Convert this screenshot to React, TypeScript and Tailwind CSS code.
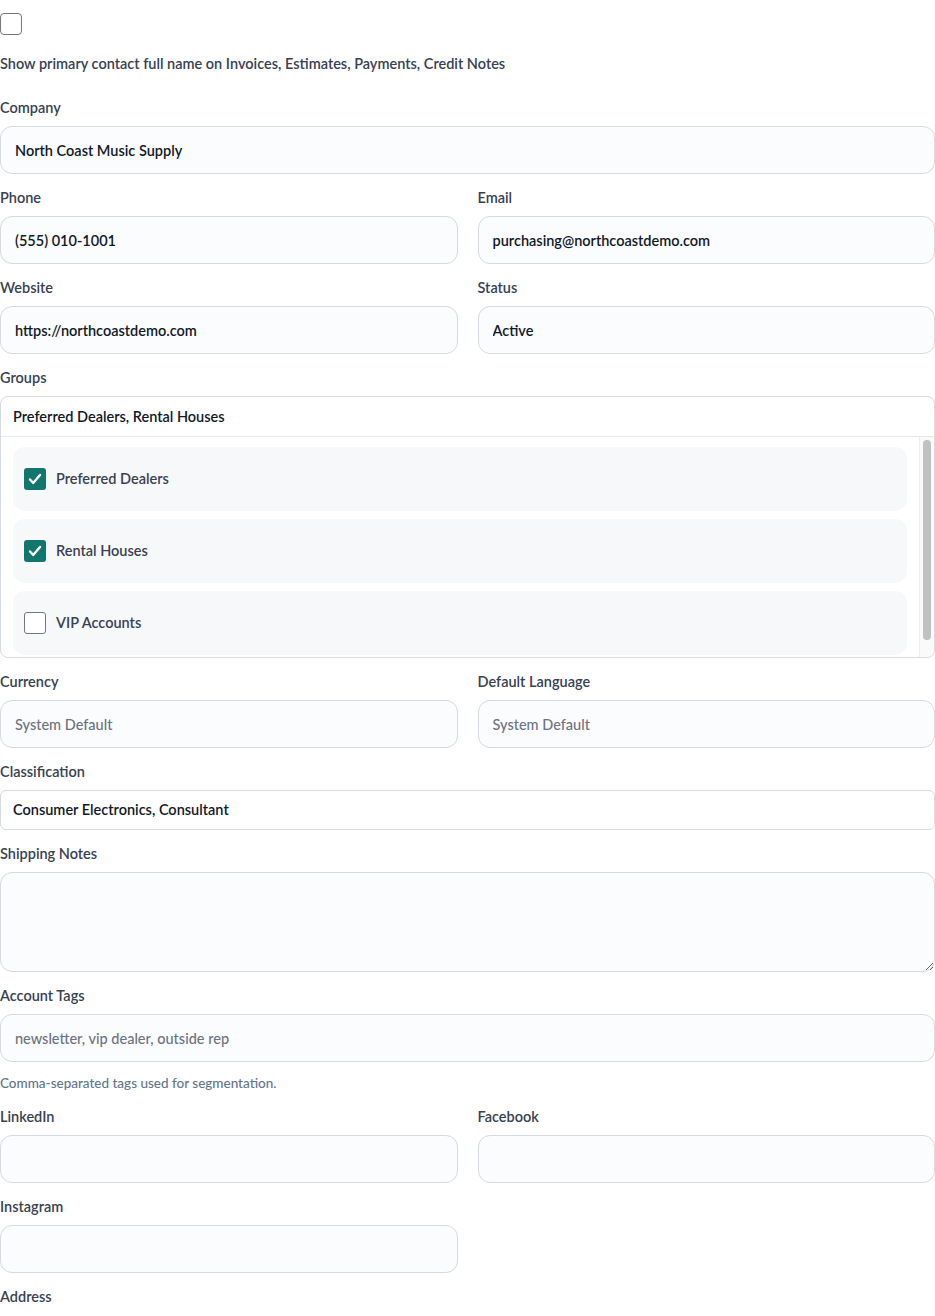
import React from "react";

const inputCls =
  "h-12 w-full rounded-xl border border-[#d5d9e0] bg-[#fbfcfd] px-[14px] text-[14.5px] font-semibold text-[#111827] placeholder:text-[#6b7280] placeholder:font-medium outline-none";

function Label({ children }: { children: React.ReactNode }) {
  return <label className="mb-2 block h-5 text-[14.5px] font-semibold leading-5 text-[#374151]">{children}</label>;
}

function Field({ label, value, placeholder }: { label: string; value?: string; placeholder?: string }) {
  return (
    <div>
      <Label>{label}</Label>
      <input className={inputCls} defaultValue={value} placeholder={placeholder} />
    </div>
  );
}

function Check({ checked }: { checked: boolean }) {
  return checked ? (
    <span className="flex h-[22px] w-[22px] items-center justify-center rounded-[3px] bg-[#13766c]">
      <svg width="16" height="16" viewBox="0 0 16 16" fill="none">
        <path d="M3 8.5l3.2 3.5L13 4" stroke="white" strokeWidth="2.4" strokeLinecap="round" strokeLinejoin="round" />
      </svg>
    </span>
  ) : (
    <span className="h-[22px] w-[22px] rounded-[3px] border border-[#767676] bg-white" />
  );
}

export default function App() {
  const groups = [
    { n: "Preferred Dealers", c: true },
    { n: "Rental Houses", c: true },
    { n: "VIP Accounts", c: false },
  ];
  return (
    <div className="w-[935px] bg-white pt-[13px] pb-2" style={{ fontFamily: "Lato, 'Open Sans', sans-serif" }}>
      <span className="block h-[22px] w-[22px] rounded-[4px] border border-[#767676] bg-white" />
      <p className="mt-[19px] text-[14.5px] font-semibold leading-5 text-[#374151]">
        Show primary contact full name on Invoices, Estimates, Payments, Credit Notes
      </p>
      <div className="mt-[24px] flex flex-col gap-[14px]">
        <Field label="Company" value="North Coast Music Supply" />
        <div className="grid grid-cols-2 gap-x-5 gap-y-[14px]">
          <Field label="Phone" value="(555) 010-1001" />
          <Field label="Email" value="purchasing@northcoastdemo.com" />
          <Field label="Website" value="https://northcoastdemo.com" />
          <Field label="Status" value="Active" />
        </div>
        <div>
          <Label>Groups</Label>
          <div className="overflow-hidden rounded-lg border border-[#d5d9e0] bg-white">
            <div className="flex h-10 items-center border-b border-[#e5e7eb] px-3 text-[14.5px] font-semibold text-[#111827]">
              Preferred Dealers, Rental Houses
            </div>
            <div className="flex">
              <div className="flex flex-1 flex-col gap-2 pl-3 pr-3 pt-[10px] pb-[2px]">
                {groups.map((g) => (
                  <div key={g.n} className="flex h-16 items-center gap-[10px] rounded-xl bg-[#f7f8fa] pl-[11px]">
                    <Check checked={g.c} />
                    <span className="text-[14.5px] font-semibold text-[#374151]">{g.n}</span>
                  </div>
                ))}
              </div>
              <div className="w-[15px] border-l border-[#eeeeee] bg-[#fafafa] py-[3px] px-[3px]">
                <div className="h-[200px] rounded-full bg-[#c1c1c1]" />
              </div>
            </div>
          </div>
        </div>
        <div className="grid grid-cols-2 gap-x-5">
          <Field label="Currency" placeholder="System Default" />
          <Field label="Default Language" placeholder="System Default" />
        </div>
        <div>
          <Label>Classification</Label>
          <div className="flex h-10 items-center rounded-md border border-[#d5d9e0] bg-white px-3 text-[14.5px] font-semibold text-[#111827]">
            Consumer Electronics, Consultant
          </div>
        </div>
        <div>
          <Label>Shipping Notes</Label>
          <textarea className="block h-[100px] w-full rounded-xl border border-[#d5d9e0] bg-[#fbfcfd] px-[14px] py-3 text-[14px] outline-none" />
        </div>
        <div>
          <Field label="Account Tags" placeholder="newsletter, vip dealer, outside rep" />
          <p className="mt-[11px] text-[13.5px] font-medium leading-5 text-[#64748b]">Comma-separated tags used for segmentation.</p>
        </div>
        <div className="grid grid-cols-2 gap-x-5 gap-y-[14px]">
          <Field label="LinkedIn" />
          <Field label="Facebook" />
          <Field label="Instagram" />
        </div>
        <Label>Address</Label>
      </div>
    </div>
  );
}
